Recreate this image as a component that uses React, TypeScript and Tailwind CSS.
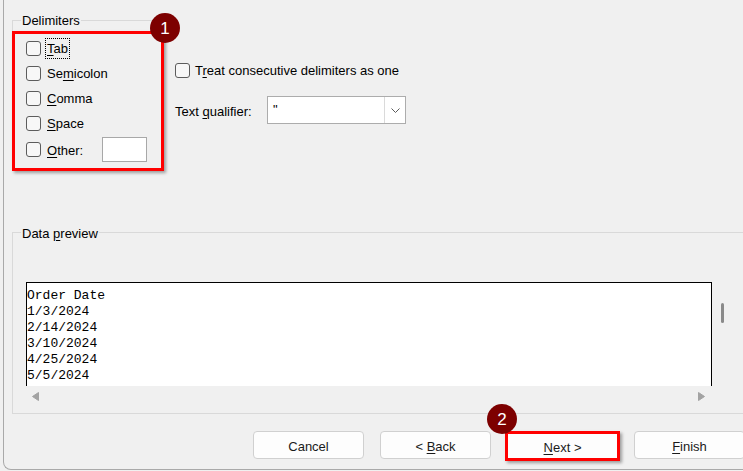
import React from "react";

// Access-key letter, drawn underlined like a Win32 mnemonic
const K = ({ children }: { children: React.ReactNode }) => (
  <span className="underline decoration-1 underline-offset-[2px]">{children}</span>
);

const CheckBox = () => (
  <span className="block h-[15px] w-[15px] shrink-0 rounded-[3px] border border-[#5c5c5c] bg-[#f7f7f7]" />
);

const Badge = ({ n, className }: { n: number; className: string }) => (
  <div
    className={
      "absolute flex h-[30px] w-[30px] items-center justify-center rounded-full bg-[#7d0000] text-[17px] leading-none text-white " +
      className
    }
  >
    {n}
  </div>
);

const delimiters: { pre: string; key: string; post: string; focus?: boolean }[] = [
  { pre: "", key: "T", post: "ab", focus: true },
  { pre: "Se", key: "m", post: "icolon" },
  { pre: "", key: "C", post: "omma" },
  { pre: "", key: "S", post: "pace" },
];

const preview = ["Order Date", "1/3/2024", "2/14/2024", "3/10/2024", "4/25/2024", "5/5/2024"];

const Arrow = ({ dir }: { dir: "left" | "right" }) => (
  <svg width="7" height="9" viewBox="0 0 7 9">
    <path
      d={dir === "left" ? "M6.5 0.5 L0.5 4.5 L6.5 8.5 Z" : "M0.5 0.5 L6.5 4.5 L0.5 8.5 Z"}
      fill="#a3a3a3"
      stroke="#a3a3a3"
      strokeLinejoin="round"
    />
  </svg>
);

const Button = ({ children }: { children: React.ReactNode }) => (
  <button className="h-[28px] w-[111px] shrink-0 rounded-[4px] border border-[#d0d0d0] bg-[#fdfdfd] pt-[2px] text-[13px] leading-none text-[#1a1a1a]">
    {children}
  </button>
);

export default function App() {
  return (
    <div className="relative h-[471px] w-[743px] overflow-hidden bg-[#f0f0f0] font-['Liberation_Sans',Arial,sans-serif] text-[13px] leading-[16px] text-black">
      <div className="ml-[3px] flex h-[470px] flex-col rounded-bl-[8px] border-b border-l border-[#a9a9a9] pl-[8px]">
        {/* delimiter options + qualifier */}
        <div className="flex h-[224px] items-start">
          <fieldset className="mt-[12px] w-[152px] border border-[#d9d9d9]">
            <legend className="ml-[8px] px-px">
              <span className="relative top-[1px]">Delimiters</span>
            </legend>
            <div className="-mx-px -mb-px mt-[3px] border-[3px] border-[#ff0000] pb-[6px] pl-[11px] pt-[2px] shadow-[2px_2px_3px_rgba(0,0,0,0.35)]">
              {delimiters.map((d) => (
                <div key={d.post} className="flex h-[25px] items-center gap-[4px]">
                  <CheckBox />
                  <span
                    className={
                      "border px-px pb-px pt-[2px] " + (d.focus ? "border-dotted border-black" : "border-transparent")
                    }
                  >
                    {d.pre}
                    <K>{d.key}</K>
                    {d.post}
                  </span>
                </div>
              ))}
              <div className="mt-px flex h-[25px] items-center gap-[4px]">
                <CheckBox />
                <span className="border border-transparent px-px pt-[2px]">
                  <K>O</K>ther:
                </span>
                <span className="ml-[13px] h-[25px] w-[45px] border border-[#a8a8a8] bg-white" />
              </div>
            </div>
          </fieldset>

          <div className="ml-[11px] mt-[63px] flex flex-col">
            <div className="flex h-[15px] items-center gap-[5px]">
              <CheckBox />
              <span className="pt-px">
                T<K>r</K>eat consecutive delimiters as one
              </span>
            </div>
            <div className="mt-[18px] flex items-center">
              <span className="w-[92px] pt-[3px]">
                Text <K>q</K>ualifier:
              </span>
              <div className="flex h-[28px] w-[139px] border border-[#acacac] bg-white">
                <span className="flex-1 pl-[5px] pt-[5px]">"</span>
                <span className="flex w-[21px] items-center justify-center border-l border-[#dadada]">
                  <svg width="9" height="5" viewBox="0 0 9 5">
                    <path d="M0.5 0.5 L4.5 4.5 L8.5 0.5" fill="none" stroke="#5a5a5a" strokeWidth="1" />
                  </svg>
                </span>
              </div>
            </div>
          </div>
        </div>

        {/* data preview */}
        <fieldset className="w-[740px] border border-[#d9d9d9]">
          <legend className="ml-[8px] px-px">
            <span className="relative top-[2px]">
              Data <K>p</K>review
            </span>
          </legend>
          <div className="mt-[42px] flex pl-[13px]">
            <div className="w-[686px]">
              <div className="h-[104px] overflow-hidden border-l border-r border-t border-black bg-white pt-[5px] font-['Liberation_Mono','Courier_New',monospace] text-[13px] leading-[16px]">
                {preview.map((line) => (
                  <div key={line}>{line}</div>
                ))}
              </div>
              <div className="flex h-[27px] items-start justify-between pl-[6px] pr-[7px] pt-[6px]">
                <Arrow dir="left" />
                <Arrow dir="right" />
              </div>
            </div>
            <div className="ml-[9px] mt-[21px] h-[20px] w-[3px] rounded-full bg-[#8a8a8a]" />
          </div>
        </fieldset>

        {/* wizard buttons */}
        <div className="ml-[241px] mt-[17px] flex items-start">
          <Button>Cancel</Button>
          <div className="ml-[16px]">
            <Button>
              &lt; <K>B</K>ack
            </Button>
          </div>
          <button className="ml-[14px] h-[30px] w-[115px] shrink-0 border-[3px] border-[#ff0000] bg-[#fdfdfd] pt-[2px] text-[13px] leading-none text-[#1a1a1a] shadow-[2px_2px_3px_rgba(0,0,0,0.35)]">
            <K>N</K>ext &gt;
          </button>
          <div className="ml-[14px]">
            <Button>
              <K>F</K>inish
            </Button>
          </div>
        </div>
      </div>

      <Badge n={1} className="left-[150px] top-[13px]" />
      <Badge n={2} className="left-[487px] top-[404px]" />
    </div>
  );
}
